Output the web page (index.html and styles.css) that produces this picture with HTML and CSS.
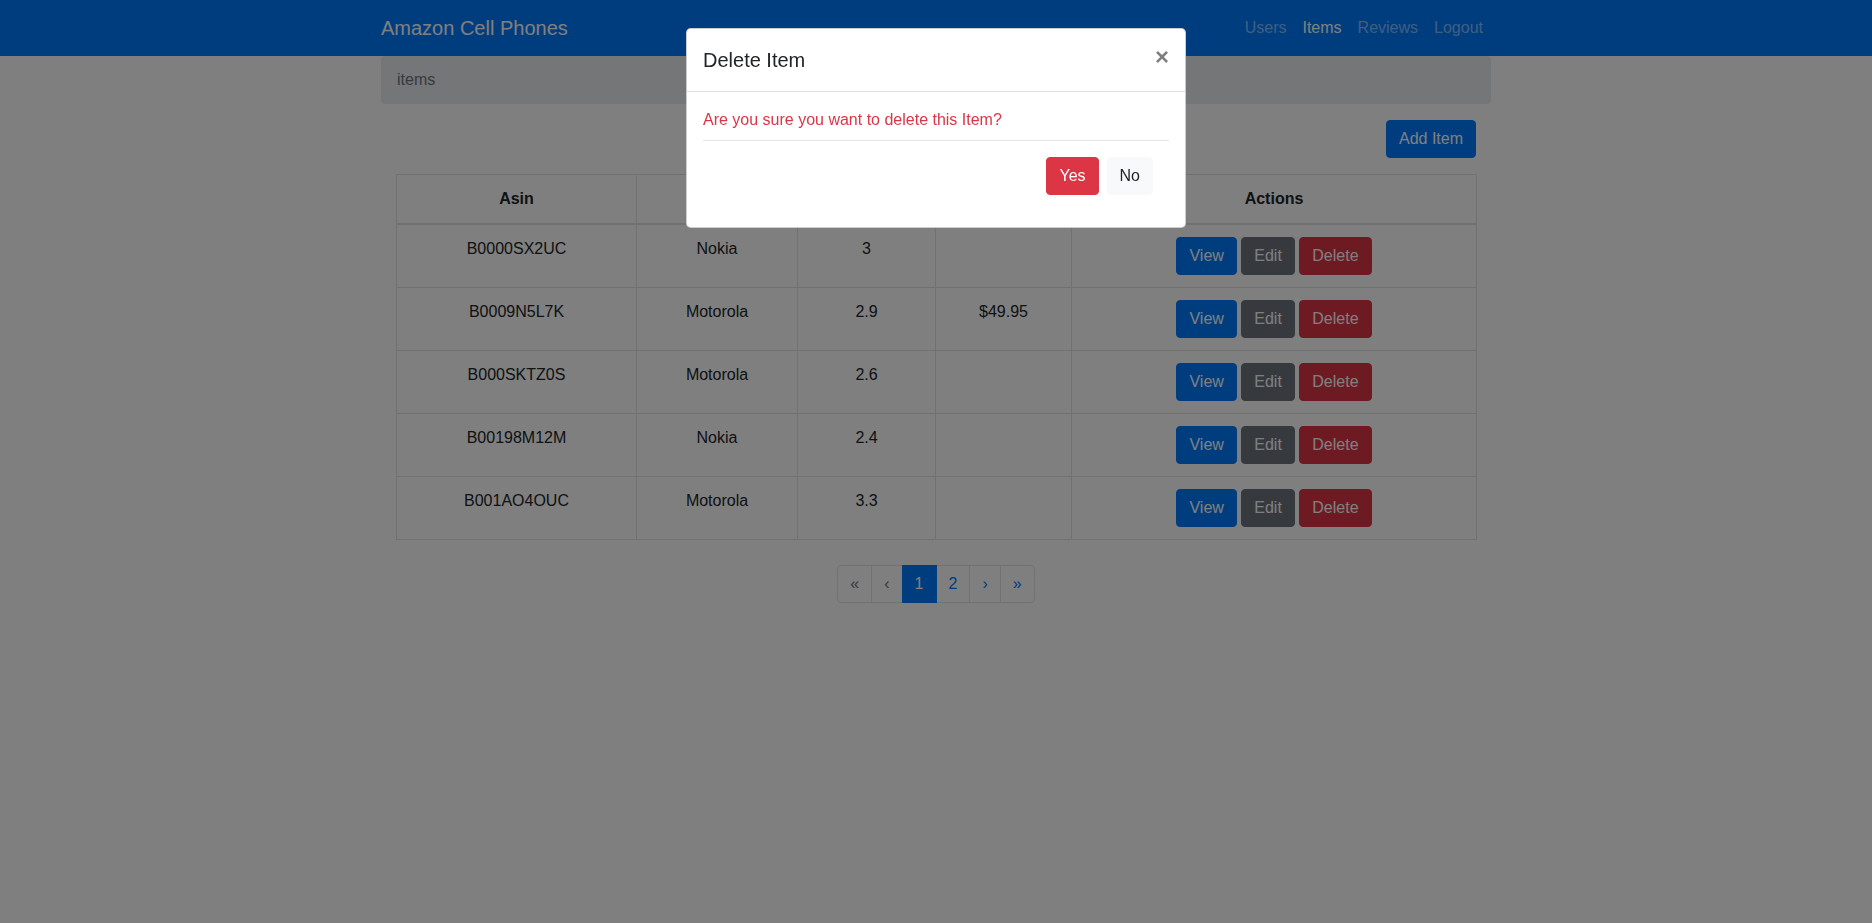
FILE: index.html
```html
<!DOCTYPE html>
<html lang="en">
<head>
<meta charset="utf-8">
<title>Amazon Cell Phones</title>
<link rel="stylesheet" href="styles.css">
</head>
<body>
<nav class="navbar">
  <div class="container nav-inner">
    <a class="brand" href="#">Amazon Cell Phones</a>
    <ul class="nav-links">
      <li><a class="nav-link" href="#">Users</a></li>
      <li><a class="nav-link active" href="#">Items</a></li>
      <li><a class="nav-link" href="#">Reviews</a></li>
      <li><a class="nav-link" href="#">Logout</a></li>
    </ul>
  </div>
</nav>

<main class="container">
  <ol class="breadcrumb"><li class="crumb-active">items</li></ol>
  <div class="inner">
    <div class="toolbar"><button class="btn btn-primary">Add Item</button></div>
    <table class="table">
      <colgroup>
        <col class="c1"><col class="c2"><col class="c3"><col class="c4"><col class="c5">
      </colgroup>
      <thead>
        <tr><th>Asin</th><th>Brand</th><th>Rating</th><th>Price</th><th>Actions</th></tr>
      </thead>
      <tbody>
        <tr><td>B0000SX2UC</td><td>Nokia</td><td>3</td><td></td>
          <td><button class="btn btn-primary">View</button> <button class="btn btn-secondary">Edit</button> <button class="btn btn-danger">Delete</button></td></tr>
        <tr><td>B0009N5L7K</td><td>Motorola</td><td>2.9</td><td>$49.95</td>
          <td><button class="btn btn-primary">View</button> <button class="btn btn-secondary">Edit</button> <button class="btn btn-danger">Delete</button></td></tr>
        <tr><td>B000SKTZ0S</td><td>Motorola</td><td>2.6</td><td></td>
          <td><button class="btn btn-primary">View</button> <button class="btn btn-secondary">Edit</button> <button class="btn btn-danger">Delete</button></td></tr>
        <tr><td>B00198M12M</td><td>Nokia</td><td>2.4</td><td></td>
          <td><button class="btn btn-primary">View</button> <button class="btn btn-secondary">Edit</button> <button class="btn btn-danger">Delete</button></td></tr>
        <tr><td>B001AO4OUC</td><td>Motorola</td><td>3.3</td><td></td>
          <td><button class="btn btn-primary">View</button> <button class="btn btn-secondary">Edit</button> <button class="btn btn-danger">Delete</button></td></tr>
      </tbody>
    </table>
    <ul class="pagination">
      <li class="page-item disabled"><span class="page-link">«</span></li>
      <li class="page-item disabled"><span class="page-link">‹</span></li>
      <li class="page-item active"><span class="page-link">1</span></li>
      <li class="page-item"><a class="page-link" href="#">2</a></li>
      <li class="page-item"><a class="page-link" href="#">›</a></li>
      <li class="page-item"><a class="page-link" href="#">»</a></li>
    </ul>
  </div>
</main>

<div class="backdrop"></div>
<div class="modal">
  <div class="modal-content">
    <div class="modal-header">
      <h5 class="modal-title">Delete Item</h5>
      <button class="close" type="button">×</button>
    </div>
    <div class="modal-body">
      <p class="warn">Are you sure you want to delete this Item?</p>
      <hr class="rule">
      <div class="modal-footer">
        <button class="btn btn-danger">Yes</button>
        <button class="btn btn-light">No</button>
      </div>
    </div>
  </div>
</div>
</body>
</html>
```

FILE: styles.css
```css
* { box-sizing: border-box; }
html, body { margin: 0; padding: 0; }
body {
  font-family: "Liberation Sans", Arial, Helvetica, sans-serif;
  font-size: 16px;
  line-height: 1.5;
  color: #212529;
  background: #fff;
}
a { text-decoration: none; }

.container {
  width: 100%;
  max-width: 1140px;
  margin: 0 auto;
  padding: 0 15px;
}

/* Navbar */
.navbar {
  background: #007bff;
  padding: 8px 16px;
}
.nav-inner {
  display: flex;
  align-items: center;
  justify-content: space-between;
}
.brand {
  color: #fff;
  font-size: 20px;
  line-height: 30px;
  padding: 5px 0;
}
.nav-links {
  list-style: none;
  margin: 0;
  padding: 0;
  display: flex;
}
.nav-link {
  display: block;
  padding: 8px;
  color: rgba(255, 255, 255, 0.5);
}
.nav-link.active { color: #fff; }

/* Breadcrumb */
.breadcrumb {
  list-style: none;
  margin: 0 0 16px;
  padding: 12px 16px;
  background: #e9ecef;
  border-radius: 4px;
}
.crumb-active { color: #6c757d; }

.inner { padding: 0 15px; }

.toolbar {
  display: flex;
  justify-content: flex-end;
  margin-bottom: 16px;
}

/* Buttons */
.btn {
  display: inline-block;
  font-family: inherit;
  font-size: 16px;
  line-height: 24px;
  padding: 6px 12px;
  border: 1px solid transparent;
  border-radius: 4px;
  color: #fff;
  cursor: pointer;
  vertical-align: middle;
}
.btn-primary { background: #007bff; border-color: #007bff; }
.btn-secondary { background: #6c757d; border-color: #6c757d; }
.btn-danger { background: #dc3545; border-color: #dc3545; }
.btn-light { background: #f8f9fa; border-color: #f8f9fa; color: #212529; }

/* Table */
.table {
  width: 100%;
  border-collapse: collapse;
  table-layout: fixed;
  margin-bottom: 25px;
  border: 1px solid #dee2e6;
}
.c1 { width: 240px; }
.c2 { width: 161px; }
.c3 { width: 138px; }
.c4 { width: 136px; }
.c5 { width: 405px; }
.table th, .table td {
  padding: 12px;
  border: 1px solid #dee2e6;
  text-align: center;
  vertical-align: top;
}
.table th {
  font-weight: 700;
  border-bottom-width: 2px;
}

/* Pagination */
.pagination {
  list-style: none;
  margin: 0;
  padding: 0;
  display: flex;
  justify-content: center;
}
.page-link {
  display: block;
  padding: 8px 12px;
  line-height: 20px;
  margin-left: -1px;
  color: #007bff;
  background: #fff;
  border: 1px solid #dee2e6;
}
.page-item:first-child .page-link {
  margin-left: 0;
  border-radius: 4px 0 0 4px;
}
.page-item:last-child .page-link { border-radius: 0 4px 4px 0; }
.page-item.disabled .page-link { color: #6c757d; }
.page-item.active .page-link {
  background: #007bff;
  border-color: #007bff;
  color: #fff;
  position: relative;
  z-index: 1;
}

/* Modal */
.backdrop {
  position: fixed;
  inset: 0;
  background: rgba(0, 0, 0, 0.5);
  z-index: 10;
}
.modal {
  position: fixed;
  inset: 0;
  z-index: 20;
}
.modal-content {
  width: 500px;
  margin: 28px auto;
  background: #fff;
  border: 1px solid rgba(0, 0, 0, 0.2);
  border-radius: 4.8px;
}
.modal-header {
  display: flex;
  align-items: flex-start;
  justify-content: space-between;
  padding: 16px;
  border-bottom: 1px solid #dee2e6;
}
.modal-title {
  margin: 0;
  font-size: 20px;
  line-height: 30px;
  font-weight: 500;
}
.close {
  margin: -16px -16px -16px auto;
  padding: 16px;
  background: transparent;
  border: 0;
  font-family: inherit;
  font-size: 24px;
  font-weight: 700;
  line-height: 1;
  color: #000;
  text-shadow: 0 1px 0 #fff;
  opacity: 0.5;
  cursor: pointer;
}
.modal-body { padding: 16px; }
.warn {
  margin: 0 0 8px;
  color: #dc3545;
}
.rule {
  margin: 0;
  border: 0;
  border-top: 1px solid rgba(0, 0, 0, 0.1);
}
.modal-footer {
  display: flex;
  justify-content: flex-end;
  gap: 8px;
  padding: 16px;
}
```
